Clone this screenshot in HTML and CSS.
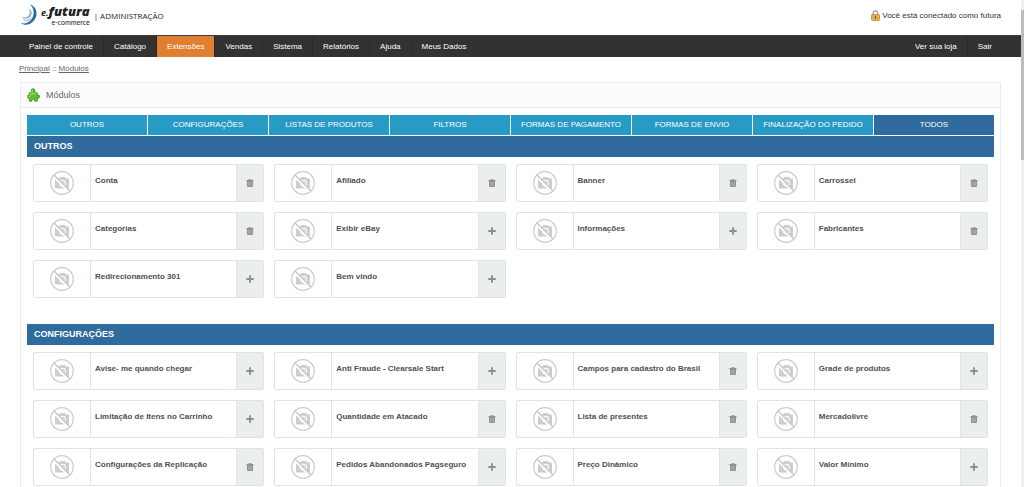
FILE: index.html
```html
<!DOCTYPE html>
<html lang="pt-BR">
<head>
<meta charset="utf-8">
<meta name="viewport" content="width=device-width, initial-scale=1">
<title>Módulos</title>
<link rel="stylesheet" href="styles.css">
</head>
<body>
<svg class="sprite" aria-hidden="true">
  <symbol id="no-photo" viewBox="0 0 24 24">
    <circle cx="12" cy="12" r="11.3" fill="none" stroke="#cbcbcb" stroke-width="1.2"/>
    <path d="M5 7.600h4.200l1.200-1.600h4.400l1.400 1.600H19v9.800H5z" fill="#cdcdcd"/>
    <circle cx="12.600" cy="12.200" r="3.400" fill="#fff"/>
    <circle cx="12.600" cy="12.200" r="2.400" fill="#d6d6d6"/>
    <path d="M4.800 6.200 18.600 20" stroke="#fff" stroke-width="2.800"/>
    <path d="M4 4 20 20" stroke="#c6c6c6" stroke-width="1.200"/>
  </symbol>
  <symbol id="trash" viewBox="0 0 8 8">
    <path d="M2.800.9V.4h2.400v.5" fill="none" stroke="#8d8d8d" stroke-width=".8"/>
    <path d="M.5.900h7v1.300h-7zM1 2.200h6V7q0 1-1 1H2Q1 8 1 7z" fill="#929292"/>
    <path d="M2.700 3.200v3.600M4 3.200v3.600M5.300 3.200v3.600" stroke="#c4c6c7" stroke-width=".5"/>
  </symbol>
  <symbol id="plus" viewBox="0 0 8 8">
    <path d="M4 .3v7.400M.3 4h7.400" stroke="#8f8f8f" stroke-width="1.900"/>
  </symbol>
</svg>
<div class="shell">
<div class="page">
  <header class="header">
    <a class="brand" href="#">
      <svg class="brand-mark" viewBox="0 0 18 22" aria-hidden="true">
        <path d="M10 .6C17.6 3 18.6 12.200 13 17.600 9.500 21.200 4 22 .8 18.800 5 20.500 9.600 18.600 12 14.500 14.700 9.800 14 4 10 .6z" fill="#2d6ba1"/>
        <path d="M8.200 4.200C12.500 6 12.800 10.500 9.800 13.200 7.400 15.500 3.800 15.400 2 13 4.800 14.100 7.500 13.300 9 11 10.400 8.800 10 6 8.200 4.200z" fill="#8fb4d2"/>
        <path d="M2.500 14.800C6 17 10 15.700 12 12.200 11.400 17.200 5.400 19.500 2.500 14.800z" fill="#a9c5dc"/>
      </svg>
      <span class="wordmark">
        <span class="wordmark-name"><span class="wordmark-e">e.</span>futura</span>
        <span class="wordmark-sub">e-commerce</span>
      </span>
      <span class="brand-area">| ADMINISTRAÇÃO</span>
    </a>
    <div class="session">
      <svg class="lock" viewBox="0 0 9 11" aria-hidden="true">
        <path d="M2.200 5.500V3.200a2.300 2.300 0 0 1 4.600 0v2.300" fill="none" stroke="#a3a3a3" stroke-width="1.300"/>
        <rect x=".5" y="4.600" width="8" height="5.900" rx=".8" fill="#dfa93a" stroke="#a8761c" stroke-width=".6"/>
        <path d="M1 6h7M1 8.900h7" stroke="#f4d67c" stroke-width=".6"/>
        <path d="M4.500 6.400v2.200" stroke="#5c4312" stroke-width="1.200"/>
      </svg>
      <span>Você está conectado como futura</span>
    </div>
  </header>
  <nav class="nav">
    <ul class="menu">
      <li><a href="#">Painel de controle</a></li>
      <li><a href="#">Catálogo</a></li>
      <li><a class="active" href="#">Extensões</a></li>
      <li><a href="#">Vendas</a></li>
      <li><a href="#">Sistema</a></li>
      <li><a href="#">Relatórios</a></li>
      <li><a href="#">Ajuda</a></li>
      <li><a href="#">Meus Dados</a></li>
    </ul>
    <ul class="menu">
      <li><a href="#">Ver sua loja</a></li>
      <li><a href="#">Sair</a></li>
    </ul>
  </nav>
  <div class="breadcrumb"><a href="#">Principal</a> :: <a href="#">Módulos</a></div>
  <main class="box">
    <div class="box-head">
      <svg class="puzzle" viewBox="0 0 13 14" aria-hidden="true">
        <path d="M4.800 4.800C3.600 2.600 4.300.7 6 .7s2.700 1.900 1.500 4.100h2.800v2.500c1.300-.7 2.300-.1 2.300 1.300s-1 2-2.300 1.300v3.300H7.700c.5-2.200-3.300-2.200-2.800 0H2.300V9.900C1.300 10.500.4 9.900.4 8.600s.9-1.900 1.900-1.300V4.800z" fill="#62bb32" stroke="#36901d" stroke-width=".8" stroke-linejoin="round"/>
        <path d="M5.500 4.500C4.800 2.900 5 1.700 6 1.600M3.200 5.700h6.200M3.200 5.700v2.400M1.300 8.600h1.500" fill="none" stroke="#a9e573" stroke-width=".9"/>
      </svg>
      <h1>Módulos</h1>
    </div>
    <div class="box-body">
      <div class="tabs">
        <button type="button">OUTROS</button>
        <button type="button">CONFIGURAÇÕES</button>
        <button type="button">LISTAS DE PRODUTOS</button>
        <button type="button">FILTROS</button>
        <button type="button">FORMAS DE PAGAMENTO</button>
        <button type="button">FORMAS DE ENVIO</button>
        <button type="button">FINALIZAÇÃO DO PEDIDO</button>
        <button type="button" class="selected">TODOS</button>
      </div>
      <section class="group">
        <h2>OUTROS</h2>
        <div class="cards">
          <article class="card"><svg class="thumb"><use href="#no-photo"/></svg><h3>Conta</h3><button type="button" aria-label="Remover Conta"><svg><use href="#trash"/></svg></button></article>
          <article class="card"><svg class="thumb"><use href="#no-photo"/></svg><h3>Afiliado</h3><button type="button" aria-label="Remover Afiliado"><svg><use href="#trash"/></svg></button></article>
          <article class="card"><svg class="thumb"><use href="#no-photo"/></svg><h3>Banner</h3><button type="button" aria-label="Remover Banner"><svg><use href="#trash"/></svg></button></article>
          <article class="card"><svg class="thumb"><use href="#no-photo"/></svg><h3>Carrossel</h3><button type="button" aria-label="Remover Carrossel"><svg><use href="#trash"/></svg></button></article>
          <article class="card"><svg class="thumb"><use href="#no-photo"/></svg><h3>Categorias</h3><button type="button" aria-label="Remover Categorias"><svg><use href="#trash"/></svg></button></article>
          <article class="card"><svg class="thumb"><use href="#no-photo"/></svg><h3>Exibir eBay</h3><button type="button" aria-label="Instalar Exibir eBay"><svg><use href="#plus"/></svg></button></article>
          <article class="card"><svg class="thumb"><use href="#no-photo"/></svg><h3>Informações</h3><button type="button" aria-label="Instalar Informações"><svg><use href="#plus"/></svg></button></article>
          <article class="card"><svg class="thumb"><use href="#no-photo"/></svg><h3>Fabricantes</h3><button type="button" aria-label="Remover Fabricantes"><svg><use href="#trash"/></svg></button></article>
          <article class="card"><svg class="thumb"><use href="#no-photo"/></svg><h3>Redirecionamento 301</h3><button type="button" aria-label="Instalar Redirecionamento 301"><svg><use href="#plus"/></svg></button></article>
          <article class="card"><svg class="thumb"><use href="#no-photo"/></svg><h3>Bem vindo</h3><button type="button" aria-label="Instalar Bem vindo"><svg><use href="#plus"/></svg></button></article>
        </div>
      </section>
      <section class="group">
        <h2>CONFIGURAÇÕES</h2>
        <div class="cards">
          <article class="card"><svg class="thumb"><use href="#no-photo"/></svg><h3>Avise- me quando chegar</h3><button type="button" aria-label="Instalar Avise- me quando chegar"><svg><use href="#plus"/></svg></button></article>
          <article class="card"><svg class="thumb"><use href="#no-photo"/></svg><h3>Anti Fraude - Clearsale Start</h3><button type="button" aria-label="Instalar Anti Fraude - Clearsale Start"><svg><use href="#plus"/></svg></button></article>
          <article class="card"><svg class="thumb"><use href="#no-photo"/></svg><h3>Campos para cadastro do Brasil</h3><button type="button" aria-label="Remover Campos para cadastro do Brasil"><svg><use href="#trash"/></svg></button></article>
          <article class="card"><svg class="thumb"><use href="#no-photo"/></svg><h3>Grade de produtos</h3><button type="button" aria-label="Instalar Grade de produtos"><svg><use href="#plus"/></svg></button></article>
          <article class="card"><svg class="thumb"><use href="#no-photo"/></svg><h3>Limitação de Itens no Carrinho</h3><button type="button" aria-label="Instalar Limitação de Itens no Carrinho"><svg><use href="#plus"/></svg></button></article>
          <article class="card"><svg class="thumb"><use href="#no-photo"/></svg><h3>Quantidade em Atacado</h3><button type="button" aria-label="Remover Quantidade em Atacado"><svg><use href="#trash"/></svg></button></article>
          <article class="card"><svg class="thumb"><use href="#no-photo"/></svg><h3>Lista de presentes</h3><button type="button" aria-label="Remover Lista de presentes"><svg><use href="#trash"/></svg></button></article>
          <article class="card"><svg class="thumb"><use href="#no-photo"/></svg><h3>Mercadolivre</h3><button type="button" aria-label="Remover Mercadolivre"><svg><use href="#trash"/></svg></button></article>
          <article class="card"><svg class="thumb"><use href="#no-photo"/></svg><h3>Configurações da Replicação</h3><button type="button" aria-label="Remover Configurações da Replicação"><svg><use href="#trash"/></svg></button></article>
          <article class="card"><svg class="thumb"><use href="#no-photo"/></svg><h3>Pedidos Abandonados Pagseguro</h3><button type="button" aria-label="Instalar Pedidos Abandonados Pagseguro"><svg><use href="#plus"/></svg></button></article>
          <article class="card"><svg class="thumb"><use href="#no-photo"/></svg><h3>Preço Dinâmico</h3><button type="button" aria-label="Remover Preço Dinâmico"><svg><use href="#trash"/></svg></button></article>
          <article class="card"><svg class="thumb"><use href="#no-photo"/></svg><h3>Valor Mínimo</h3><button type="button" aria-label="Instalar Valor Mínimo"><svg><use href="#plus"/></svg></button></article>
        </div>
      </section>
    </div>
  </main>
</div>
<div class="scroll-track"><div class="scroll-thumb"></div></div>
</div>
</body>
</html>
```
FILE: styles.css
```css
* { box-sizing: border-box; }
body {
  margin: 0;
  background: #fff;
  color: #333;
  font: 8px/12px "Liberation Sans", Arial, sans-serif;
}
h1, h2, h3, ul { margin: 0; padding: 0; font: inherit; }
ul { list-style: none; }
button { border: 0; padding: 0; font: inherit; cursor: pointer; }
svg { flex: none; }
.sprite { position: absolute; width: 0; height: 0; }

.shell { display: flex; height: 100vh; overflow: hidden; }
.page { flex: 1; min-width: 0; }
.scroll-track { width: 3px; padding-top: 10px; background: #f1f1f1; }
.scroll-thumb { height: 150px; background: #bcbcbc; }

.header {
  display: flex;
  justify-content: space-between;
  align-items: center;
  height: 35px;
  padding: 0 20px 4px;
}
.brand { display: flex; align-items: center; color: #222; text-decoration: none; }
.brand-mark { width: 18px; height: 22px; margin: 0 3px 2px 0; }
.wordmark { display: flex; flex-direction: column; align-items: flex-end; padding-bottom: 1px; }
.wordmark-name { font: italic 800 13px/13px "Open Sans", sans-serif; }
.wordmark-e { font-size: 9px; font-weight: bold; }
.wordmark-sub { font: 7px/6px Lato, sans-serif; }
.brand-area { margin-left: 4px; font: 8px/12px "Open Sans", sans-serif; }
.session { display: flex; align-items: center; gap: 2px; }
.lock { width: 9px; height: 11px; }

.nav {
  display: flex;
  justify-content: space-between;
  padding: 0 19px;
  background: #323232;
  border-top: 1px solid #3d3d3d;
}
.menu { display: flex; }
.menu li + li { border-left: 1px solid #292929; }
.menu a {
  display: block;
  padding: 0 10px;
  color: #fff;
  line-height: 21px;
  text-decoration: none;
}
.menu .active { background: #e07f2f; }

.breadcrumb { padding: 6px 19px 7px; color: #666; }
.breadcrumb a { color: #666; }

.box { margin: 0 20px; border: 1px solid #ececec; border-bottom: 0; }
.box-head {
  display: flex;
  align-items: center;
  gap: 6px;
  height: 25px;
  padding-left: 6px;
  background: #fcfcfc;
  border-bottom: 1px solid #e6e6e6;
}
.puzzle { width: 13px; height: 14px; }
.box-head h1 { color: #666; font-size: 9px; }
.box-body { padding: 7px 6px; }

.tabs { display: grid; grid-template-columns: repeat(8, 1fr); gap: 1px; margin-bottom: 1px; }
.tabs button { background: #279bc6; color: #fff; line-height: 20px; }
.tabs .selected { background: #306b9d; }

.group { margin-bottom: 26px; }
.group h2 {
  padding-left: 7px;
  background: #306b9d;
  color: #fff;
  font-size: 9px;
  font-weight: bold;
  line-height: 21px;
}
.cards { display: grid; grid-template-columns: repeat(4, 1fr); gap: 10px; padding: 7px 6px 0; }
.card {
  display: flex;
  height: 38px;
  border: 1px solid #e2e2e2;
  border-radius: 2px;
  overflow: hidden;
}
.thumb { width: 57px; height: 36px; padding: 6px 16px; border-right: 1px solid #e2e2e2; }
.card h3 { flex: 1; min-width: 0; padding-left: 4px; color: #505050; font-weight: bold; line-height: 32px; }
.card button { display: grid; place-items: center; width: 27px; background: #ebeeef; border-left: 1px solid #e2e5e6; }
.card button svg { width: 8px; height: 8px; }
```
